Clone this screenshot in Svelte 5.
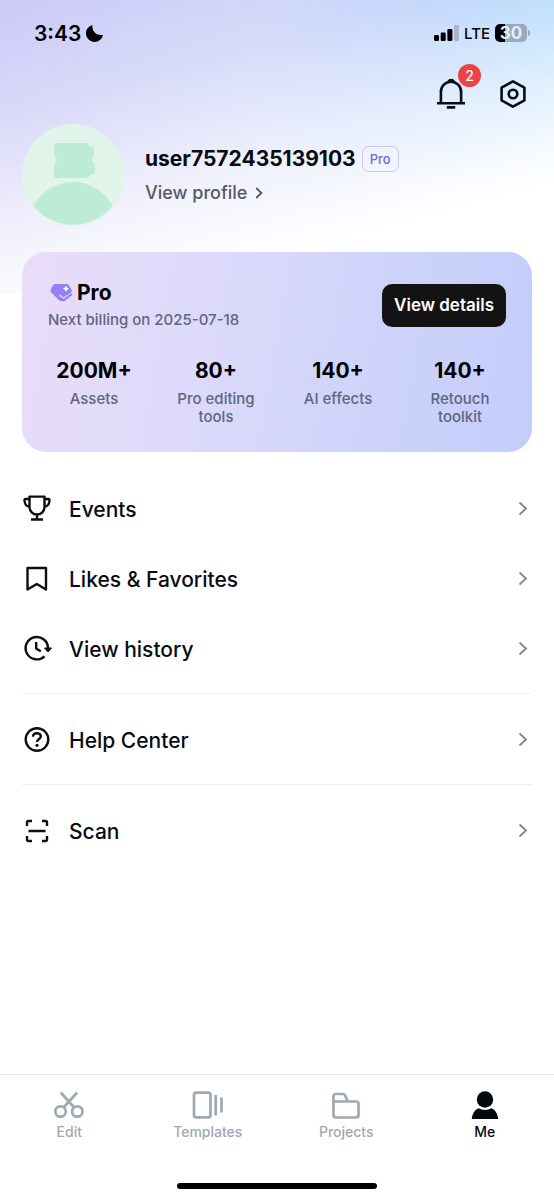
<script>
  const stats = [
    { value: '200M+', label: 'Assets' },
    { value: '80+', label: 'Pro editing tools' },
    { value: '140+', label: 'AI effects' },
    { value: '140+', label: 'Retouch toolkit' }
  ];
  const groups = [
    [
      { icon: 'trophy', label: 'Events' },
      { icon: 'bookmark', label: 'Likes & Favorites' },
      { icon: 'history', label: 'View history' }
    ],
    [{ icon: 'help', label: 'Help Center' }],
    [{ icon: 'scan', label: 'Scan' }]
  ];
  const tabs = ['Edit', 'Templates', 'Projects', 'Me'];
  let active = $state('Me');
</script>

<div class="page">
  <header class="status">
    <div class="clock">
      <span>3:43</span>
      <svg width="18" height="18" viewBox="0 0 18 18"><path d="M6.6 1C5.4 6.7 9.9 12.2 17 10.9A8.6 8.6 0 1 1 6.6 1Z" fill="#000" /></svg>
    </div>
    <div class="signals">
      <svg width="25" height="16" viewBox="0 0 25 16">
        <rect x="0" y="10" width="5" height="6" rx="1.3" />
        <rect x="6.7" y="7.5" width="5" height="8.5" rx="1.3" />
        <rect x="13.4" y="4" width="5" height="12" rx="1.3" />
        <rect x="20" y="0" width="5" height="16" rx="1.3" fill="#a5b6c8" />
      </svg>
      <span class="network">LTE</span>
      <span class="battery"><span class="level">30</span><i></i></span>
    </div>
  </header>

  <div class="actions">
    <button class="plain" aria-label="Notifications">
      <svg width="30" height="30" viewBox="0 0 30 30" fill="none" stroke="#0b0e16" stroke-width="2.6">
        <path d="M4.9 24V12.8a10.1 10.1 0 0 1 20.2 0V24M1 24.2h28M10.8 28.4h8.4" />
        <path d="M12.5 2.8a2.8 2.4 0 0 1 5.4 0" fill="#0b0e16" />
      </svg>
      <span class="count">2</span>
    </button>
    <button class="plain" aria-label="Settings">
      <svg width="30" height="30" viewBox="0 0 30 30" fill="none" stroke="#0b0e16" stroke-width="2.6" stroke-linejoin="round">
        <path d="M15 2.3 26.4 8.6V21.4L15 27.7 3.6 21.4V8.6Z" />
        <circle cx="15" cy="15" r="4.3" />
      </svg>
    </button>
  </div>

  <section class="profile">
    <svg width="102" height="102" viewBox="0 0 102 102">
      <circle cx="51" cy="51" r="51" fill="#e0f4ea" />
      <path d="M35 19H64Q67 19 67 22Q72 22 72 26V32Q72 34 69 36Q72 38 73 42V48Q73 51 68 51Q67 54 64 54H35Q32 54 32 51V43Q32 39 35 36Q32 33 32 30V22Q32 19 35 19Z" fill="#bdebd6" />
      <path d="M11.5 82C29 50 73 50 90.500 82A51 51 0 0 1 11.500 82Z" fill="#bdebd6" />
    </svg>
    <div class="who">
      <div class="nameline">
        <h1>user7572435139103</h1>
        <span class="tag">Pro</span>
      </div>
      <a href="#profile">View profile
        <svg width="8" height="12" viewBox="0 0 8 12" fill="none" stroke="#555963" stroke-width="1.8"><path d="M1.200 1 6.400 6 1.200 11" /></svg>
      </a>
    </div>
  </section>

  <section class="card">
    <div class="cardtop">
      <div>
        <h2>
          <svg width="25" height="20" viewBox="0 0 25 20">
            <path d="M7 1H18.500Q20 1 21 2.400L23.500 6.500Q24.300 8 23.200 9.200L14.500 17.500Q13 18.800 11.500 17.500L3 9.300Q1.900 8.200 2.700 6.800L5 2.200Q5.600 1 7 1Z" fill="#9381f0" />
            <path d="M18 2.500 19.100 4.800 21.400 5.800 19.100 6.800 18 9.100 16.900 6.800 14.600 5.800 16.900 4.800Z" fill="#fff" />
            <path d="m11.500 12 3.800 3.400 9.500-6.200" fill="none" stroke="#e2dbfb" stroke-width="1.600" />
            <path d="m12.500 14.800 3.200 2.500 8.200-6.500" fill="none" stroke="#9381f0" stroke-width="2.300" />
          </svg>
          Pro
        </h2>
        <p>Next billing on 2025-07-18</p>
      </div>
      <button class="details">View details</button>
    </div>
    <ul class="stats">
      {#each stats as stat}
        <li><strong>{stat.value}</strong><span>{stat.label}</span></li>
      {/each}
    </ul>
  </section>

  <main>
    {#each groups as group}
      <div class="group">
        {#each group as item}
          <button class="row">
            <svg width="30" height="30" viewBox="0 0 30 30" fill="none" stroke="#0b0e16" stroke-width="2.4" stroke-linejoin="round">
              {#if item.icon === 'trophy'}
                <path d="M7.500 2.600H22.500V13a7.500 7.500 0 0 1-15 0ZM7.500 5H3.500Q2.300 5 2.500 6.500C2.800 10 4 12.500 7.600 12.700M22.500 5H26.500Q27.700 5 27.500 6.500C27.200 10 26 12.500 22.400 12.700M15 20.500V25.500M9 25.500H21" />
              {:else if item.icon === 'bookmark'}
                <path d="M5.500 4H24V25.500L14.800 20 5.500 25.500Z" />
              {:else if item.icon === 'history'}
                <path d="M22.500 22.300A11.200 11.200 0 1 1 26 14.500" />
                <path d="M14.200 8V14.600L18.800 17.200" />
                <path d="M22.500 14H29.500L26 18Z" fill="#0b0e16" stroke-width="1" />
              {:else if item.icon === 'help'}
                <circle cx="15" cy="14.500" r="11.300" />
                <path d="M11 11.800C11 7 19 7.200 18.800 11.500 18.700 13.800 15 14.200 15 17" />
                <circle cx="15" cy="20.300" r="1.600" fill="#0b0e16" stroke="none" />
              {:else}
                <path d="M5 10V6.500Q5 5 6.500 5H10M20 5h3.500Q25 5 25 6.500V10M25 20v3.500Q25 25 23.500 25H20M10 25H6.500Q5 25 5 23.500V20M6.500 15H23.500" />
              {/if}
            </svg>
            <span>{item.label}</span>
            <svg width="10" height="16" viewBox="0 0 10 16" fill="none" stroke="#85878c" stroke-width="1.9"><path d="M1.500 1.500 8 7.500 1.500 13.500" /></svg>
          </button>
        {/each}
      </div>
    {/each}
  </main>

  <footer>
    <nav>
      {#each tabs as tab}
        <button class="tab" class:active={tab === active} onclick={() => (active = tab)}>
          <svg width="32" height="30" viewBox="0 0 32 30" fill="none" stroke="#9fa8b3" stroke-width="2.7">
            {#if tab === 'Edit'}
              <circle cx="7.500" cy="21.500" r="5.200" /><circle cx="24.300" cy="21.500" r="5.200" />
              <path d="M7.700 2.500 21.200 17.500M24.100 2.500 10.600 17.500" />
            {:else if tab === 'Templates'}
              <rect x="2" y="2.600" width="16.500" height="24.800" rx="2.500" />
              <path d="M23.700 5V25.500M29.500 7.500V22.500" />
            {:else if tab === 'Projects'}
              <path d="M3.500 11.500H26Q28.500 11.500 28.500 14V25Q28.500 27.500 26 27.500H6Q3.500 27.500 3.500 25V6.500Q3.500 4 6 4H13Q14.600 4 15.200 5.500L17.700 11.500" stroke-linejoin="round" />
            {:else}
              <g fill="#05080e" stroke="none"><circle cx="16" cy="9.500" r="8.200" /><path d="M2.800 29C3.300 23.500 5.700 19.800 9.500 18.200Q16 21.800 22.500 18.200C26.300 19.800 28.700 23.500 29.200 29Z" /></g>
            {/if}
          </svg>
          <span>{tab}</span>
        </button>
      {/each}
    </nav>
    <div class="home"></div>
  </footer>
</div>

<style>
  :global(body) { margin: 0; background: #fff; }
  .page {
    min-height: 100vh;
    display: flex;
    flex-direction: column;
    font-family: Inter, "Liberation Sans", sans-serif;
    color: #080b12;
    background:
      linear-gradient(165deg, rgba(255, 255, 255, 0) 0%, rgba(255, 255, 255, .25) 25%, rgba(255, 255, 255, .68) 50%, rgba(255, 255, 255, .9) 66%, #fff 75%) 0 0 / 100% 294px no-repeat,
      linear-gradient(97deg, #cccaf7 0%, #c9cff8 45%, #adc9fa 75%, #8dcbfa 100%) 0 0 / 100% 294px no-repeat,
      #fff;
  }
  button { font: inherit; color: inherit; border: 0; background: none; padding: 0; cursor: pointer; }
  svg { flex: none; }
  h1, h2, p, ul { margin: 0; padding: 0; }
  .status { display: flex; justify-content: space-between; align-items: center; height: 66px; padding: 0 24px 0 34px; color: #000; }
  .clock { display: flex; align-items: center; gap: 5px; font-size: 21px; font-weight: 600; }
  .signals { display: flex; align-items: center; gap: 5px; }
  .network { font-size: 15px; font-weight: 500; }
  .battery { display: flex; align-items: center; gap: 1px; }
  .level { width: 32px; border-radius: 5px; background: linear-gradient(to right, #000 30%, #98a9ba 30%); color: #e6edf6; font-size: 17px; font-weight: 700; line-height: 18px; text-align: center; }
  .battery i { width: 2px; height: 6px; border-radius: 0 2px 2px 0; background: #98a9ba; }
  .actions { display: flex; justify-content: flex-end; gap: 32px; padding: 13px 26px 15px; }
  .plain { display: flex; position: relative; }
  .count { position: absolute; left: 22px; top: -15px; width: 23px; height: 23px; border-radius: 50%; background: #ec4444; color: #fff; font-size: 14px; font-weight: 500; line-height: 23px; text-align: center; }
  .profile { display: flex; align-items: center; gap: 21px; padding: 0 22px; }
  .nameline { display: flex; align-items: center; gap: 6px; }
  h1 { font-size: 21px; font-weight: 700; line-height: 28px; }
  .tag { padding: 0 7px; border: 1px solid #cfc5f6; border-radius: 7px; color: #7466dc; font-size: 13px; font-weight: 500; line-height: 24px; }
  .who a { display: flex; align-items: center; gap: 8px; margin-top: 8px; color: #555963; font-size: 18px; font-weight: 500; line-height: 24px; text-decoration: none; }
  .card { box-sizing: border-box; min-height: 200px; margin: 26px 22px 0; padding: 28px 11px 24px; border-radius: 24px; background: linear-gradient(100deg, #e9ddf9 0%, #dddafb 35%, #cfd4fa 65%, #c3cdfa 100%); }
  .cardtop { display: flex; justify-content: space-between; align-items: center; padding: 0 15px; }
  h2 { display: flex; align-items: center; gap: 4px; color: #000; font-size: 21px; font-weight: 700; line-height: 26px; }
  p { margin-top: 4px; color: #606580; font-size: 15px; font-weight: 500; line-height: 20px; }
  .details { padding: 0 12px; border-radius: 10px; background: #131313; color: #fff; font-size: 17px; font-weight: 600; line-height: 43px; }
  .stats { display: grid; grid-template-columns: repeat(4, 1fr); margin-top: 28px; list-style: none; text-align: center; }
  .stats li { display: flex; flex-direction: column; gap: 6px; padding: 0 16px; }
  .stats strong { color: #000; font-size: 21px; font-weight: 700; line-height: 26px; }
  .stats span { color: #606580; font-size: 15px; font-weight: 500; line-height: 18px; }
  main { padding: 11px 22px 24px; }
  .group { padding: 11px 0 9px; border-bottom: 1px solid #efeff1; }
  .group:last-child { border: 0; }
  .row { display: flex; align-items: center; gap: 17px; width: 100%; height: 70px; padding-right: 4px; font-size: 21px; font-weight: 500; text-align: left; }
  .row span { flex: 1; }
  footer { margin-top: auto; border-top: 1px solid #e9eaec; }
  nav { display: grid; grid-template-columns: repeat(4, 1fr); padding-top: 15px; }
  .tab { display: flex; flex-direction: column; align-items: center; gap: 3px; color: #a0a8b3; font-size: 14px; font-weight: 500; line-height: 18px; }
  .tab.active { color: #05080e; }
  .home { width: 36%; height: 6px; margin: 42px auto 11px; border-radius: 3px; background: #000; }
</style>
